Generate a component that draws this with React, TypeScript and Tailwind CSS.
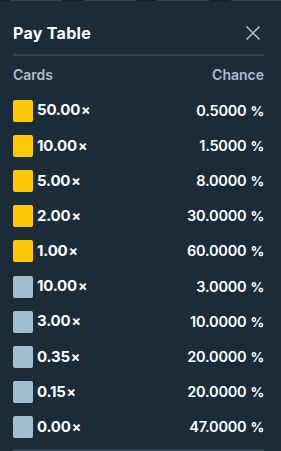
import React from "react";

const rows = [
  { m: "50.00", c: "0.5000", gold: true },
  { m: "10.00", c: "1.5000", gold: true },
  { m: "5.00", c: "8.0000", gold: true },
  { m: "2.00", c: "30.0000", gold: true },
  { m: "1.00", c: "60.0000", gold: true },
  { m: "10.00", c: "3.0000", gold: false },
  { m: "3.00", c: "10.0000", gold: false },
  { m: "0.35", c: "20.0000", gold: false },
  { m: "0.15", c: "20.0000", gold: false },
  { m: "0.00", c: "47.0000", gold: false },
];

export default function App() {
  return (
    <div
      className="w-[281px] h-[451px] bg-[#1a2c38] flex flex-col overflow-hidden"
      style={{ fontFamily: "Inter, 'Noto Sans', sans-serif" }}
    >
      <div className="flex h-[1px] shrink-0">
        <div className="w-[10px] bg-[#0f212e]" />
        <div className="w-[52px] bg-[#2f4553]" />
        <div className="w-[22px] bg-[#0f212e]" />
        <div className="w-[52px] bg-[#2f4553]" />
        <div className="w-[21px] bg-[#0f212e]" />
        <div className="w-[52px] bg-[#2f4553]" />
        <div className="w-[22px] bg-[#0f212e]" />
        <div className="flex-1 bg-[#2f4553]" />
      </div>
      <div className="pl-[13px] pr-[17px] flex flex-col flex-1">
        <div className="flex items-center justify-between h-[38px] mt-[13px] mb-[2px]">
          <span className="text-white font-bold text-[16px] tracking-[0.3px]">Pay Table</span>
          <svg width="18" height="18" viewBox="0 0 18 18" className="mr-[2px]">
            <path d="M2.5 2.5 L15.5 15.5 M15.5 2.5 L2.5 15.5" stroke="#b1bad3" strokeWidth="1.6" fill="none" />
          </svg>
        </div>
        <div className="h-[2px] bg-[#2f4553]" />
        <div className="flex items-center justify-between h-[37px] text-[#b1bad3] font-semibold text-[14px]">
          <span>Cards</span>
          <span>Chance</span>
        </div>
        <div className="flex flex-col">
          {rows.map((r, i) => (
            <div key={i} className="flex items-center justify-between h-[35.2px]">
              <div className="flex items-center gap-[4px]">
                <div
                  className={
                    "w-[20px] h-[22px] rounded-[2px] " +
                    (r.gold ? "bg-[#ffc800]" : "bg-[#a1bdcf]")
                  }
                />
                <span className="text-white font-bold text-[15px] tracking-[-0.2px]">
                  {r.m}
                  <span className="text-[14px] ml-[1px]">×</span>
                </span>
              </div>
              <span className="text-white font-semibold text-[14.5px] tracking-[-0.2px]">
                {r.c}
                <span className="ml-[4px] font-bold text-[13.5px]">%</span>
              </span>
            </div>
          ))}
        </div>
        <div className="flex-1" />
        <div className="h-[2px] bg-[#2f4553]" />
      </div>
    </div>
  );
}
